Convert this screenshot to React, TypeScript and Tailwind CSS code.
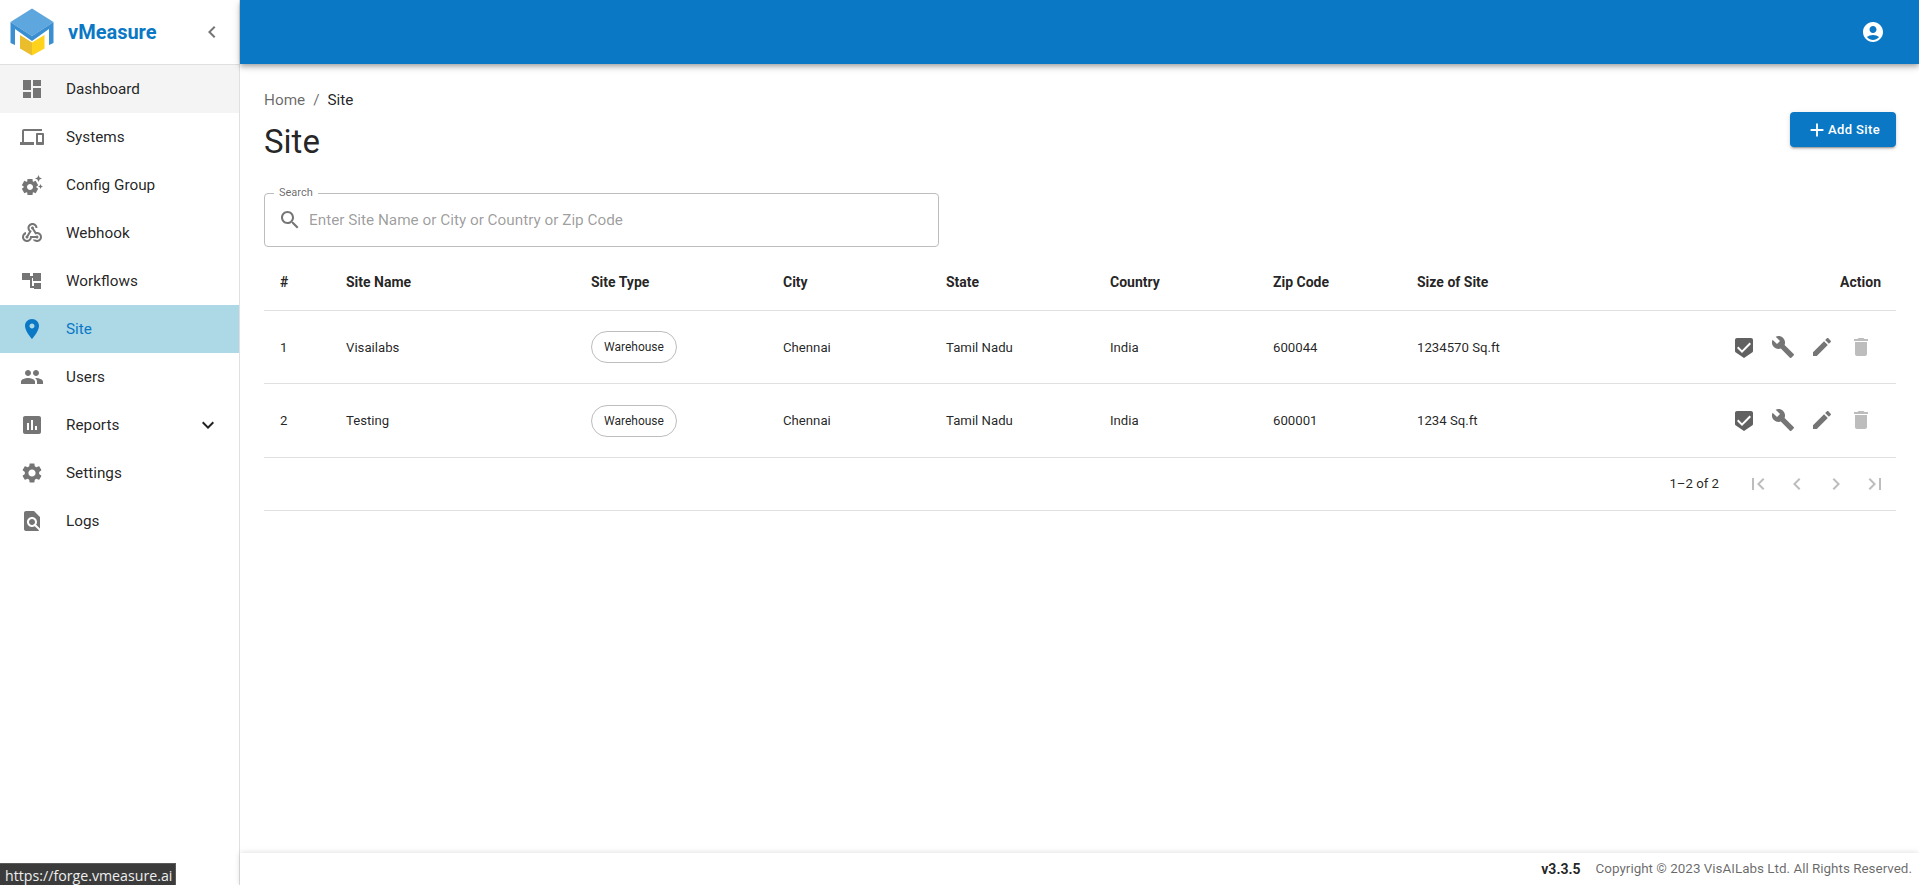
import type { ReactNode } from "react";

const paths = {
  dashboard: "M3 13h8V3H3v10zm0 8h8v-6H3v6zm10 0h8V11h-8v10zm0-18v6h8V3h-8z",
  systems:
    "M4 6h18V4H4c-1.1 0-2 .9-2 2v11H0v3h14v-3H4V6zm19 2h-6c-.55 0-1 .45-1 1v10c0 .55.45 1 1 1h6c.55 0 1-.45 1-1V9c0-.55-.45-1-1-1zm-1 9h-4v-7h4v7z",
  config:
    "M17.41 6.59 15 5.5l2.41-1.09L18.5 2l1.09 2.41L22 5.5l-2.41 1.09L18.5 9l-1.09-2.41zm3.87 6.13L20.5 11l-.78 1.72-1.72.78 1.72.78.78 1.72.78-1.72L23 13.5l-1.72-.78zm-5.04 1.65 1.94 1.47-2.5 4.33-2.24-.94c-.2.13-.42.26-.64.37l-.3 2.4h-5l-.3-2.41c-.22-.11-.43-.23-.64-.37l-2.24.94-2.5-4.33 1.94-1.47c-.01-.11-.01-.24-.01-.37s0-.26.01-.38l-1.94-1.47 2.5-4.33 2.24.94c.2-.13.42-.26.64-.37L7.5 6h5l.3 2.41c.22.11.43.23.64.37l2.24-.94 2.5 4.33-1.94 1.47c.01.12.01.24.01.37s0 .24-.01.36zM13 14c0-1.66-1.34-3-3-3s-3 1.34-3 3 1.34 3 3 3 3-1.34 3-3z",
  webhook:
    "M10 15h5.88c.27-.31.67-.5 1.12-.5.83 0 1.5.67 1.5 1.5s-.67 1.5-1.5 1.5c-.44 0-.84-.19-1.12-.5H11.9c-.46 2.28-2.48 4-4.9 4-2.76 0-5-2.24-5-5 0-2.42 1.72-4.44 4-4.9v2.07c-1.16.41-2 1.53-2 2.83 0 1.65 1.35 3 3 3s3-1.35 3-3v-2zm2.5-11c1.65 0 3 1.35 3 3h2c0-2.76-2.24-5-5-5s-5 2.24-5 5c0 1.43.6 2.71 1.55 3.62l-2.35 3.9c-.68.14-1.2.75-1.2 1.48 0 .83.67 1.5 1.5 1.5s1.5-.67 1.5-1.5c0-.16-.02-.31-.07-.45l3.38-5.63C10.49 9.61 9.5 8.42 9.5 7c0-1.65 1.35-3 3-3zm4.5 9c-.64 0-1.23.2-1.72.54l-3.05-5.07C11.53 8.35 11 7.74 11 7c0-.83.67-1.5 1.5-1.5S14 6.17 14 7c0 .15-.02.29-.06.43l2.19 3.65c.28-.05.57-.08.87-.08 2.76 0 5 2.24 5 5s-2.24 5-5 5c-1.85 0-3.47-1.01-4.33-2.5h2.67c.48.32 1.05.5 1.66.5 1.65 0 3-1.35 3-3s-1.35-3-3-3z",
  workflows: "M2 4h8v7H2zM13 4h8v8h-8zM10 7h3v2h-1v8h2v2h-4V9h0zM14 14h7v6h-7z",
  site: "M12 2C8.13 2 5 5.13 5 9c0 5.25 7 13 7 13s7-7.75 7-13c0-3.87-3.13-7-7-7zm0 9.5c-1.38 0-2.5-1.12-2.5-2.5s1.12-2.5 2.5-2.5 2.5 1.12 2.5 2.5-1.12 2.5-2.5 2.5z",
  users:
    "M16 11c1.66 0 2.99-1.34 2.99-3S17.66 5 16 5c-1.66 0-3 1.34-3 3s1.34 3 3 3zm-8 0c1.66 0 2.99-1.34 2.99-3S9.66 5 8 5C6.34 5 5 6.34 5 8s1.34 3 3 3zm0 2c-2.33 0-7 1.17-7 3.5V19h14v-2.5c0-2.33-4.67-3.5-7-3.5zm8 0c-.29 0-.62.02-.97.05 1.16.84 1.97 1.97 1.97 3.45V19h6v-2.5c0-2.33-4.67-3.5-7-3.5z",
  reports:
    "M19 3H5c-1.1 0-2 .9-2 2v14c0 1.1.9 2 2 2h14c1.1 0 2-.9 2-2V5c0-1.1-.9-2-2-2zM9 17H7v-7h2v7zm4 0h-2V7h2v10zm4 0h-2v-4h2v4z",
  settings:
    "M19.14 12.94c.04-.3.06-.61.06-.94 0-.32-.02-.64-.07-.94l2.03-1.58c.18-.14.23-.41.12-.61l-1.92-3.32c-.12-.22-.37-.29-.59-.22l-2.39.96c-.5-.38-1.03-.7-1.62-.94l-.36-2.54c-.04-.24-.24-.41-.48-.41h-3.84c-.24 0-.43.17-.47.41l-.36 2.54c-.59.24-1.13.57-1.62.94l-2.39-.96c-.22-.08-.47 0-.59.22L2.74 8.87c-.12.21-.08.47.12.61l2.03 1.58c-.05.3-.09.63-.09.94s.02.64.07.94l-2.03 1.58c-.18.14-.23.41-.12.61l1.92 3.32c.12.22.37.29.59.22l2.39-.96c.5.38 1.03.7 1.62.94l.36 2.54c.05.24.24.41.48.41h3.84c.24 0 .44-.17.47-.41l.36-2.54c.59-.24 1.13-.56 1.62-.94l2.39.96c.22.08.47 0 .59-.22l1.92-3.32c.12-.22.07-.47-.12-.61l-2.01-1.58zM12 15.6c-1.98 0-3.6-1.62-3.6-3.6s1.62-3.6 3.6-3.6 3.6 1.62 3.6 3.6-1.62 3.6-3.6 3.6z",
  logs: "M20 19.59V8l-6-6H6c-1.1 0-1.99.9-1.99 2L4 20c0 1.1.89 2 1.99 2H18c.45 0 .85-.15 1.19-.4l-4.43-4.43c-.8.52-1.74.83-2.76.83-2.76 0-5-2.24-5-5s2.24-5 5-5 5 2.24 5 5c0 1.02-.31 1.96-.83 2.75L20 19.59zM9 13c0 1.66 1.34 3 3 3s3-1.34 3-3-1.34-3-3-3-3 1.34-3 3z",
  account:
    "M12 2C6.48 2 2 6.48 2 12s4.48 10 10 10 10-4.48 10-10S17.52 2 12 2zm0 4c1.93 0 3.5 1.57 3.5 3.5S13.93 13 12 13s-3.5-1.57-3.5-3.5S10.07 6 12 6zm0 14c-2.03 0-4.43-.82-6.14-2.88C7.55 15.8 9.68 15 12 15s4.45.8 6.14 2.12C16.43 19.18 14.03 20 12 20z",
  add: "M19 13h-6v6h-2v-6H5v-2h6V5h2v6h6v2z",
  search:
    "M15.5 14h-.79l-.28-.27C15.41 12.59 16 11.11 16 9.5 16 5.91 13.09 3 9.5 3S3 5.91 3 9.5 5.91 16 9.5 16c1.61 0 3.09-.59 4.23-1.57l.27.28v.79l5 4.99L20.49 19l-4.99-5zm-6 0C7.01 14 5 11.99 5 9.5S7.01 5 9.5 5 14 7.01 14 9.5 11.99 14 9.5 14z",
  shield:
    "M19 3H5c-1.1 0-1.99.9-1.99 2L3 15.93c0 .69.35 1.3.88 1.66L12 23l8.11-5.41c.53-.36.88-.97.88-1.66L21 5c0-1.1-.9-2-2-2zm-9 15l-5-5 1.41-1.41L10 15.17l7.59-7.59L19 9l-9 9z",
  wrench:
    "M22.7 19l-9.1-9.1c.9-2.3.4-5-1.5-6.9-2-2-5-2.4-7.4-1.3L9 6 6 9 1.6 4.7C.4 7.1.9 10.1 2.9 12.1c1.9 1.9 4.6 2.4 6.9 1.5l9.1 9.1c.4.4 1 .4 1.4 0l2.3-2.3c.5-.4.5-1.1.1-1.4z",
  edit: "M3 17.25V21h3.75L17.81 9.94l-3.75-3.75L3 17.25zM20.71 7.04c.39-.39.39-1.02 0-1.41l-2.34-2.34c-.39-.39-1.02-.39-1.41 0l-1.83 1.83 3.75 3.75 1.83-1.83z",
  trash: "M6 19c0 1.1.9 2 2 2h8c1.1 0 2-.9 2-2V7H6v12zM19 4h-3.5l-1-1h-5l-1 1H5v2h14V4z",
  first: "M18.41 16.59L13.82 12l4.59-4.59L17 6l-6 6 6 6zM6 6h2v12H6z",
  prev: "M15.41 16.59L10.83 12l4.58-4.59L14 6l-6 6 6 6 1.41-1.41z",
  next: "M8.59 16.59L13.17 12 8.59 7.41 10 6l6 6-6 6-1.41-1.41z",
  last: "M5.59 7.41L10.18 12l-4.59 4.59L7 18l6-6-6-6zM16 6h2v12h-2z",
  expand: "M16.59 8.59L12 13.17 7.41 8.59 6 10l6 6 6-6z",
  collapse: "M15.41 7.41L14 6l-6 6 6 6 1.41-1.41L10.83 12z",
};

function Icon({ d, className }: { d: string; className?: string }) {
  return (
    <svg viewBox="0 0 24 24" fill="currentColor" className={"w-6 h-6 shrink-0 " + (className ?? "")}>
      <path d={d} />
    </svg>
  );
}

function Logo() {
  return (
    <svg viewBox="10 8 45 48" className="w-[45px] h-[48px] shrink-0">
      <path d="M32 8.5 53.5 22 32 36 10.5 22z" fill="#5ea6de" />
      <path d="M10.5 22 32 36v5L15 29v16l-4.500-2z" fill="#3a8fd2" />
      <path d="M53.500 22 32 36v5l17-12v16l4.500-2z" fill="#3a8fd2" />
      <path d="M20 35 32 42.500V55.500L20 48.500z" fill="#e9bd2c" />
      <path d="M44.500 35 32 42.500V55.500L44.500 48.500z" fill="#ffd21c" />
    </svg>
  );
}

const menu = [
  { label: "Dashboard", icon: paths.dashboard, hover: true },
  { label: "Systems", icon: paths.systems },
  { label: "Config Group", icon: paths.config },
  { label: "Webhook", icon: paths.webhook },
  { label: "Workflows", icon: paths.workflows },
  { label: "Site", icon: paths.site, active: true },
  { label: "Users", icon: paths.users },
  { label: "Reports", icon: paths.reports, expand: true },
  { label: "Settings", icon: paths.settings },
  { label: "Logs", icon: paths.logs },
];

const sites = [
  { id: 1, name: "Visailabs", zip: "600044", size: "1234570 Sq.ft" },
  { id: 2, name: "Testing", zip: "600001", size: "1234 Sq.ft" },
];

const headers = ["#", "Site Name", "Site Type", "City", "State", "Country", "Zip Code", "Size of Site"];

function IconBtn({ children }: { children: ReactNode }) {
  return <button className="w-[39px] h-10 flex items-center justify-center">{children}</button>;
}

function Sidebar() {
  return (
    <aside className="w-[240px] shrink-0 border-r border-[#e0e0e0] bg-white flex flex-col">
      <div className="h-[65px] shrink-0 border-b border-[#e0e0e0] flex items-center pl-[10px]">
        <Logo />
        <span className="ml-[13px] text-[20px] font-bold text-[#0a78c5]">vMeasure</span>
        <Icon d={paths.collapse} className="ml-auto mr-[15px] text-[#757575]" />
      </div>
      <nav className="flex flex-col">
        {menu.map((item) => (
          <div
            key={item.label}
            className={
              "h-12 flex items-center pl-5 pr-[19px] text-[15.3px] " +
              (item.active
                ? "bg-[#add8e6] text-[#0a78c5]"
                : item.hover
                  ? "bg-[#f4f4f4] text-black/87"
                  : "text-black/87")
            }
          >
            <Icon d={item.icon} className={item.active ? "text-[#0a78c5]" : "text-[#757575]"} />
            <span className="ml-[22px]">{item.label}</span>
            {item.expand && <Icon d={paths.expand} className="ml-auto text-[#212121]" />}
          </div>
        ))}
      </nav>
    </aside>
  );
}

function SitesTable() {
  return (
    <table className="w-full table-fixed border-collapse mt-[7px] text-[13.2px] text-black/87">
      <colgroup>
        <col className="w-[66px]" />
        <col className="w-[245px]" />
        <col className="w-[192px]" />
        <col className="w-[163px]" />
        <col className="w-[164px]" />
        <col className="w-[163px]" />
        <col className="w-[144px]" />
        <col className="w-[300px]" />
        <col />
      </colgroup>
      <thead>
        <tr className="h-14 border-b border-[#e0e0e0]">
          {headers.map((h) => (
            <th key={h} className="px-4 pt-px text-left text-[14px] font-bold">
              {h}
            </th>
          ))}
          <th className="px-[15px] pt-px text-right text-[14px] font-bold">Action</th>
        </tr>
      </thead>
      <tbody>
        {sites.map((s) => (
          <tr key={s.id} className="h-[73.5px] border-b border-[#e0e0e0]">
            <td className="px-4 pt-[2px]">{s.id}</td>
            <td className="px-4 pt-[2px]">{s.name}</td>
            <td className="px-4 pt-px">
              <span className="inline-flex items-center h-8 px-3 rounded-2xl border border-[#bdbdbd] text-[12px]">
                Warehouse
              </span>
            </td>
            <td className="px-4 pt-[2px]">Chennai</td>
            <td className="px-4 pt-[2px]">Tamil Nadu</td>
            <td className="px-4 pt-[2px]">India</td>
            <td className="px-4 pt-[2px]">{s.zip}</td>
            <td className="px-4 pt-[2px]">{s.size}</td>
            <td className="px-4">
              <div className="flex justify-end text-[#757575]">
                <IconBtn>
                  <Icon d={paths.shield} className="text-[#616161]" />
                </IconBtn>
                <IconBtn>
                  <Icon d={paths.wrench} />
                </IconBtn>
                <IconBtn>
                  <Icon d={paths.edit} />
                </IconBtn>
                <IconBtn>
                  <Icon d={paths.trash} className="text-[#bdbdbd]" />
                </IconBtn>
              </div>
            </td>
          </tr>
        ))}
      </tbody>
    </table>
  );
}

export default function App() {
  return (
    <div className="relative h-screen flex overflow-hidden bg-white font-['Roboto',sans-serif]">
      <Sidebar />
      <div className="flex-1 min-w-0 flex flex-col">
        <header className="h-16 shrink-0 bg-[#0a78c5] shadow-[0_2px_4px_-1px_rgba(0,0,0,0.2),0_4px_5px_0_rgba(0,0,0,0.14),0_1px_10px_0_rgba(0,0,0,0.12)] flex items-center justify-end pr-[34px] text-white z-10">
          <Icon d={paths.account} />
        </header>

        <main className="flex-1 min-h-0 pl-6 pr-[23px] pt-6">
          <div className="flex justify-between">
            <div>
              <div className="flex items-center h-6 text-[15.3px] text-black/87">
                <span className="text-black/60">Home</span>
                <span className="mx-2 text-black/60">/</span>
                <span>Site</span>
              </div>
              <h1 className="mt-[9px] text-[33px] leading-[42px] font-normal text-black/87">Site</h1>
            </div>
            <button className="mt-[24px] w-[106px] h-[35px] flex items-center justify-center rounded bg-[#0a78c5] text-white text-[13px] font-medium tracking-[0.4px] shadow-[0_3px_1px_-2px_rgba(0,0,0,0.2),0_2px_2px_0_rgba(0,0,0,0.14),0_1px_5px_0_rgba(0,0,0,0.12)]">
              <Icon d={paths.add} className="w-[22px] h-[22px]" />
              Add Site
            </button>
          </div>

          <div className="relative mt-[30px] w-[675px] h-[54px] rounded border border-[#bdbdbd] flex items-center pl-[13px]">
            <span className="absolute -top-[9px] left-[9px] px-[5px] bg-white text-[11px] leading-4 text-black/60">Search</span>
            <Icon d={paths.search} className="text-[#757575]" />
            <span className="ml-[7px] text-[15.3px] text-black/40">Enter Site Name or City or Country or Zip Code</span>
          </div>

          <SitesTable />

          <div className="h-[53px] border-b border-[#e0e0e0] flex items-center justify-end pr-[2px] text-[#bdbdbd]">
            <span className="mr-[19px] text-[13.2px] text-black/87">1–2 of 2</span>
            <IconBtn>
              <Icon d={paths.first} />
            </IconBtn>
            <IconBtn>
              <Icon d={paths.prev} />
            </IconBtn>
            <IconBtn>
              <Icon d={paths.next} />
            </IconBtn>
            <IconBtn>
              <Icon d={paths.last} />
            </IconBtn>
          </div>
        </main>

        <footer className="h-8 shrink-0 bg-white shadow-[0_0_6px_rgba(0,0,0,0.15)] flex items-center justify-end pr-[7px]">
          <span className="text-[14px] font-bold text-black/87">v3.3.5</span>
          <span className="ml-[15px] text-[13.45px] text-black/60">Copyright © 2023 VisAILabs Ltd. All Rights Reserved.</span>
        </footer>
      </div>

      {/* browser link preview */}
      <div className="absolute left-0 bottom-0 w-[176px] h-[22px] bg-[#3b3b3b] border-t border-r border-[#5a5a5a] pl-[5px] text-[14.2px] leading-[24px] text-[#eeeeee] font-['Open_Sans',sans-serif] overflow-hidden whitespace-nowrap">
        https://forge.vmeasure.ai
      </div>
    </div>
  );
}
